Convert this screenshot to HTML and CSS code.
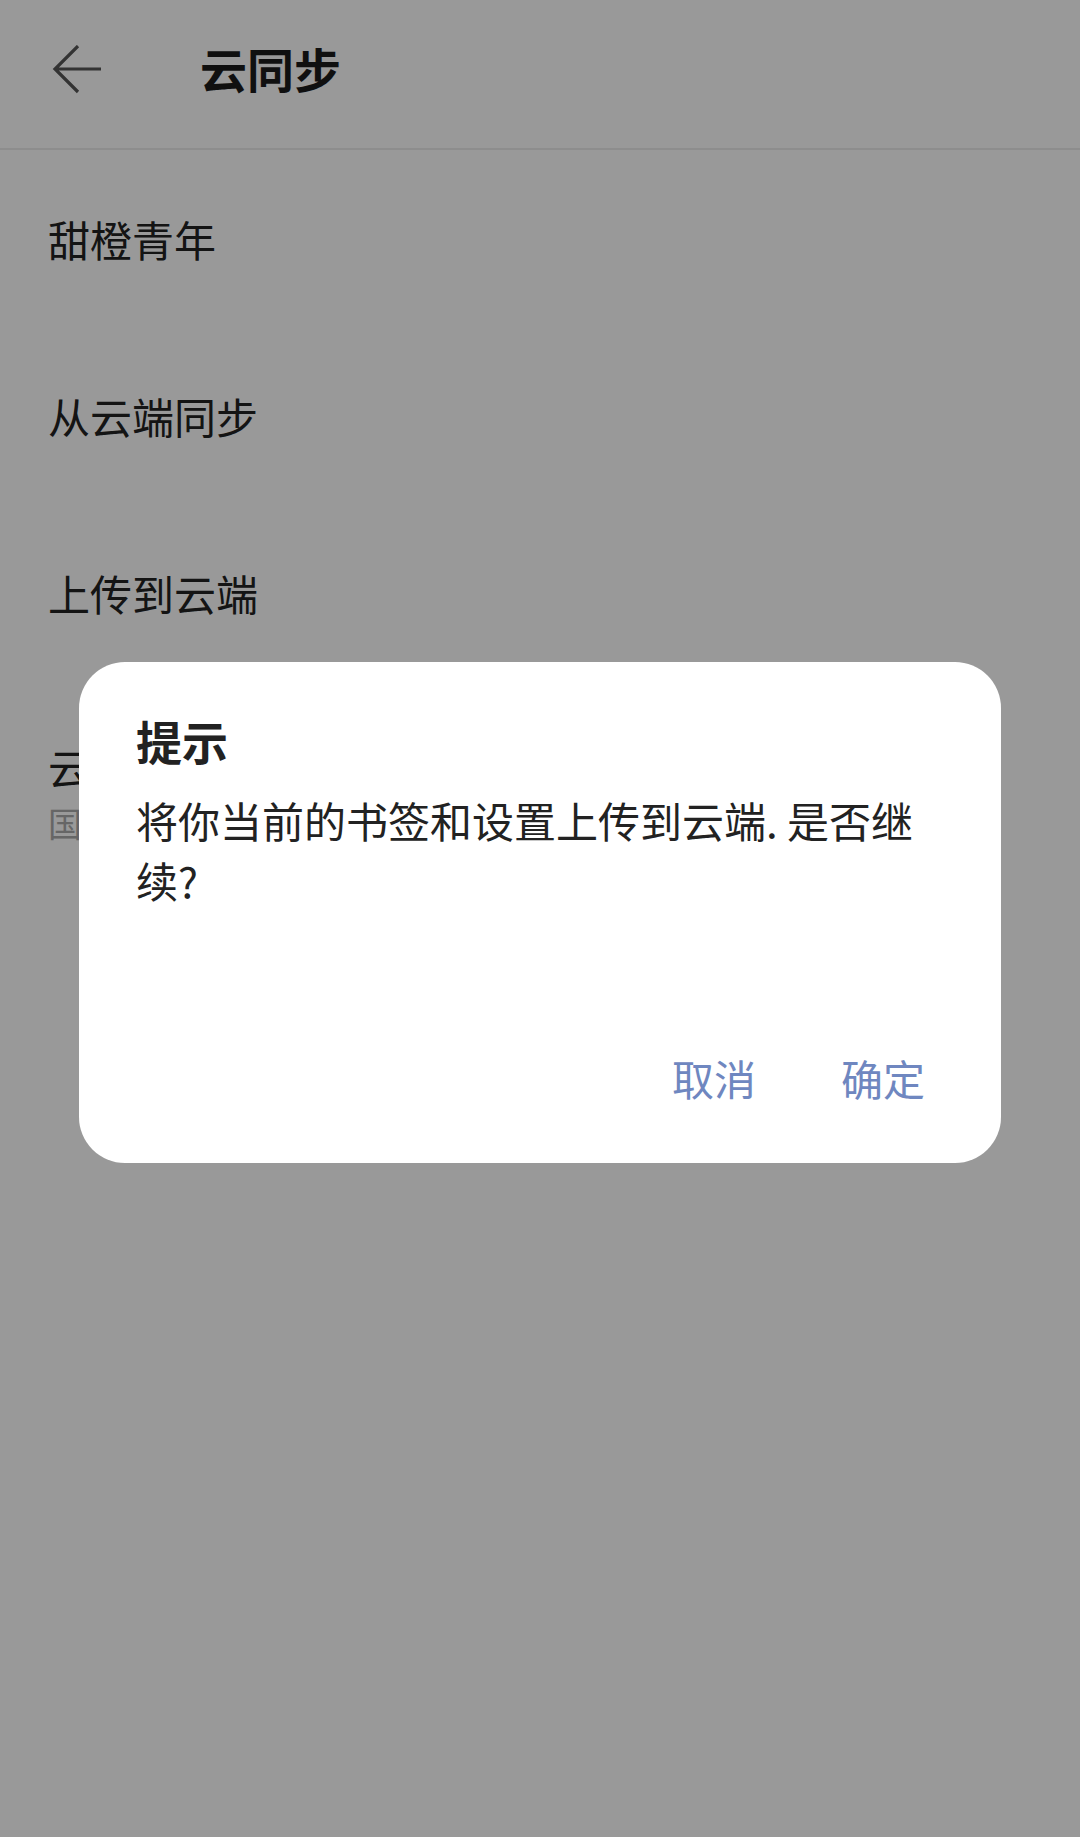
FILE: index.html
```html
<!DOCTYPE html>
<html lang="zh-CN">
<head>
    <meta charset="UTF-8">
    <meta name="viewport" content="width=device-width, initial-scale=1.0">
    <title>云同步</title>
    <link rel="stylesheet" href="styles.css">
</head>
<body>
    <header class="topbar">
        <button class="btn-back" aria-label="返回">
            <svg width="50" height="50" viewBox="0 0 50 50">
                <path d="M26 1 L3 24 L26 47 M3 24 L49 24" fill="none" stroke="#555" stroke-width="3.2" stroke-linecap="butt" stroke-linejoin="miter"/>
            </svg>
        </button>
        <h1 class="topbar-title">云同步</h1>
    </header>
    <main class="list">
        <div class="row">甜橙青年</div>
        <div class="row">从云端同步</div>
        <div class="row">上传到云端</div>
        <div class="row row-two">
            <span class="row-title">云端</span>
            <span class="row-sub">国内</span>
        </div>
    </main>

    <div class="overlay">
        <div class="dialog">
            <h2 class="dialog-title">提示</h2>
            <p class="dialog-msg">将你当前的书签和设置上传到云端. 是否继续?</p>
            <div class="dialog-actions">
                <button class="btn-text">取消</button>
                <button class="btn-text">确定</button>
            </div>
        </div>
    </div>
</body>
</html>
```

FILE: styles.css
```css
html, body {
    margin: 0;
    padding: 0;
}
body {
    font-family: "Noto Sans CJK SC", "Noto Sans", sans-serif;
    background-color: #fff;
    color: #222;
    width: 1080px;
    height: 1837px;
    overflow: hidden;
}
.topbar {
    height: 150px;
    border-bottom: 2px solid #ebebeb;
    display: flex;
    align-items: center;
    box-sizing: border-box;
}
.btn-back {
    background: none;
    border: none;
    padding: 0;
    margin-left: 52px;
    width: 50px;
    height: 50px;
    margin-top: -8px;
    display: flex;
}
.topbar-title {
    margin: 0 0 0 98px;
    font-size: 47px;
    line-height: 56px;
    font-weight: 700;
    color: #1c1c1c;
    margin-top: -12px;
}
.list {
    display: flex;
    flex-direction: column;
}
.row {
    height: 177px;
    padding: 0 48px;
    display: flex;
    align-items: center;
    font-size: 42px;
    line-height: 56px;
    color: #222;
}
.row-two {
    flex-direction: column;
    align-items: flex-start;
    justify-content: flex-start;
    padding-top: 58px;
    box-sizing: border-box;
}
.row-title {
    font-size: 42px;
    line-height: 56px;
}
.row-sub {
    font-size: 34px;
    line-height: 48px;
    margin-top: 4px;
    color: #aaa;
}
.overlay {
    position: fixed;
    inset: 0;
    background-color: rgba(0, 0, 0, 0.4);
    display: flex;
    align-items: center;
    justify-content: center;
}
.dialog {
    width: 922px;
    height: 501px;
    margin-bottom: 12px;
    background-color: #fff;
    border-radius: 46px;
    padding: 50px 76px 55px 57px;
    box-sizing: border-box;
    display: flex;
    flex-direction: column;
}
.dialog-title {
    margin: 0;
    font-size: 46px;
    line-height: 56px;
    font-weight: 700;
    color: #222;
}
.dialog-msg {
    margin: 22px 0 0;
    font-size: 42px;
    line-height: 60px;
    color: #222;
}
.dialog-actions {
    margin-top: auto;
    display: flex;
    justify-content: flex-end;
    gap: 85px;
}
.btn-text {
    background: none;
    border: none;
    padding: 0;
    font-family: inherit;
    font-size: 42px;
    line-height: 60px;
    color: #6f87c0;
}
```
